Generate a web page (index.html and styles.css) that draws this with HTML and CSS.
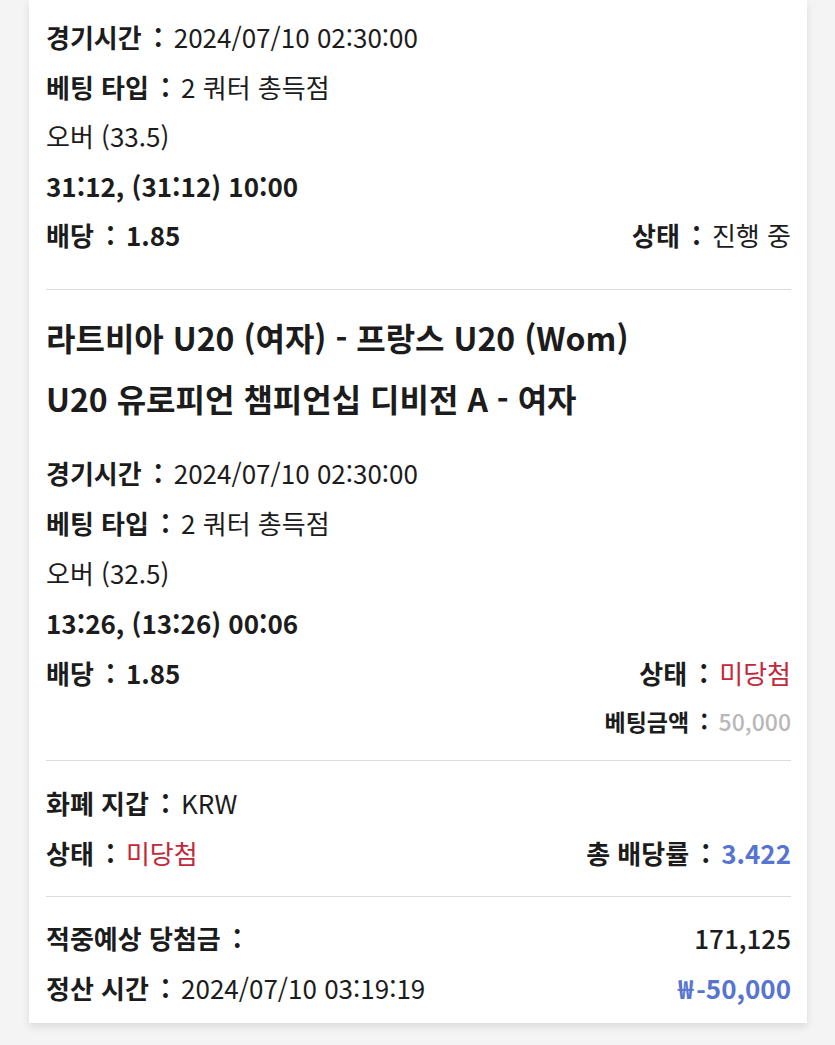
FILE: index.html
```html
<!DOCTYPE html>
<html lang="ko">
<head>
<meta charset="utf-8">
<link rel="stylesheet" href="styles.css">
</head>
<body>
<div class="card">
  <section class="bet bet-top">
    <div class="row"><span class="lbl">경기시간 <span class="c">:</span> </span><span>2024/07/10 02:30:00</span></div>
    <div class="row"><span class="lbl">베팅 타입 <span class="c">:</span> </span><span>2 쿼터 총득점</span></div>
    <div class="row"><span>오버 (33.5)</span></div>
    <div class="row"><span class="lbl">31:12, (31:12) 10:00</span></div>
    <div class="row split"><span class="lbl">배당 <span class="c">:</span> 1.85</span><span><span class="lbl">상태 <span class="c">:</span> </span><span>진행 중</span></span></div>
  </section>
  <hr class="divider">
  <section class="bet">
    <h2 class="title">라트비아 U20 (여자) - 프랑스 U20 (Wom)<br>U20 유로피언 챔피언십 디비전 A - 여자</h2>
    <div class="rows">
      <div class="row"><span class="lbl">경기시간 <span class="c">:</span> </span><span>2024/07/10 02:30:00</span></div>
      <div class="row"><span class="lbl">베팅 타입 <span class="c">:</span> </span><span>2 쿼터 총득점</span></div>
      <div class="row"><span>오버 (32.5)</span></div>
      <div class="row"><span class="lbl">13:26, (13:26) 00:06</span></div>
      <div class="row split"><span class="lbl">배당 <span class="c">:</span> 1.85</span><span><span class="lbl">상태 <span class="c">:</span> </span><span class="red">미당첨</span></span></div>
      <div class="row small right"><span class="lbl">베팅금액 <span class="c">:</span> </span><span class="grey">50,000</span></div>
    </div>
  </section>
  <hr class="divider">
  <section class="summary">
    <div class="row"><span class="lbl">화폐 지갑 <span class="c">:</span> </span><span>KRW</span></div>
    <div class="row split"><span><span class="lbl">상태 <span class="c">:</span> </span><span class="red">미당첨</span></span><span><span class="lbl">총 배당률 <span class="c">:</span> </span><span class="blue">3.422</span></span></div>
  </section>
  <hr class="divider">
  <section class="summary last">
    <div class="row split"><span class="lbl">적중예상 당첨금 <span class="c">:</span> </span><span class="strong">171,125</span></div>
    <div class="row split"><span><span class="lbl">정산 시간 <span class="c">:</span> </span><span>2024/07/10 03:19:19</span></span><span class="blue"><span class="won">₩</span>-50,000</span></div>
  </section>
</div>
</body>
</html>
```

FILE: styles.css
```css
html, body {
  margin: 0;
  padding: 0;
  background: #f4f4f4;
}
body {
  font-family: "Noto Sans CJK KR", "Noto Sans", sans-serif;
  color: #1c1c1c;
  font-size: 26px;
  height: 1045px;
  overflow: hidden;
}
.card {
  margin-left: 29px;
  width: 778px;
  box-sizing: border-box;
  padding: 0 16px 10px 17px;
  background: #fff;
  box-shadow: 0 4px 8px rgba(0, 0, 0, 0.10);
}
.bet-top {
  padding-top: 12px;
  padding-bottom: 29px;
}
.bet-top .row {
  line-height: 49.5px;
  height: 49.5px;
}
.row {
  line-height: 50px;
  height: 50px;
  white-space: pre;
}
.split {
  display: flex;
  justify-content: space-between;
}
.right {
  display: flex;
  justify-content: flex-end;
}
.small {
  font-size: 23px;
  line-height: 46px;
  height: 46px;
}
.lbl {
  font-weight: 700;
}
.c {
  margin: 0 4px 0 5px;
}
.strong {
  font-weight: 500;
}
.red {
  color: #c3283a;
}
.blue {
  color: #5674d0;
  font-weight: 700;
}
.won {
  margin-right: 3px;
}
.grey {
  color: #b8b8b8;
  font-weight: 500;
}
.divider {
  border: 0;
  height: 1px;
  background: #dcdcdc;
  margin: 0;
}
.title {
  margin: 17px 0 19px;
  font-size: 32px;
  font-weight: 700;
  line-height: 61px;
}
.rows {
  padding-bottom: 16px;
}
.summary {
  padding-top: 17px;
  padding-bottom: 18px;
}
.summary.last {
  padding-top: 16px;
  padding-bottom: 0;
}
```
